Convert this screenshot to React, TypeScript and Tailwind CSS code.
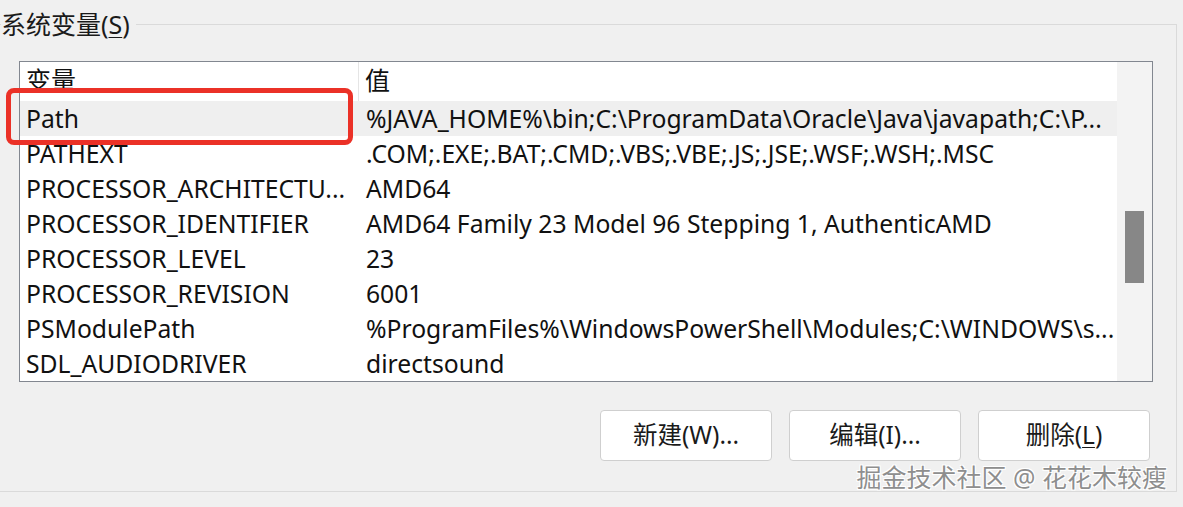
const rows = [
  { name: "Path", value: "%JAVA_HOME%\\bin;C:\\ProgramData\\Oracle\\Java\\javapath;C:\\P...", active: true },
  { name: "PATHEXT", value: ".COM;.EXE;.BAT;.CMD;.VBS;.VBE;.JS;.JSE;.WSF;.WSH;.MSC" },
  { name: "PROCESSOR_ARCHITECTU...", value: "AMD64" },
  { name: "PROCESSOR_IDENTIFIER", value: "AMD64 Family 23 Model 96 Stepping 1, AuthenticAMD" },
  { name: "PROCESSOR_LEVEL", value: "23" },
  { name: "PROCESSOR_REVISION", value: "6001" },
  { name: "PSModulePath", value: "%ProgramFiles%\\WindowsPowerShell\\Modules;C:\\WINDOWS\\s..." },
  { name: "SDL_AUDIODRIVER", value: "directsound" },
];

function Button({ children }: { children: React.ReactNode }) {
  return (
    <button className="w-[172px] h-[51px] bg-white border border-[#cfcfcf] rounded-[4px] text-[24.5px] text-[#1a1a1a] flex items-center justify-center">
      {children}
    </button>
  );
}

export default function App() {
  return (
    <div
      className="relative w-[1183px] h-[507px] bg-[#f0f0f0] overflow-hidden text-[#111]"
      style={{ fontFamily: '"Noto Sans", "Noto Sans CJK SC", sans-serif' }}
    >
      <fieldset className="-ml-[10px] mt-[8px] w-[1187px] h-[484px] border border-[#dadada] px-0">
        <legend className="ml-[10px] pr-[6px] text-[25px] leading-[32px] text-[#1a1a1a]">
          系统变量(<span className="underline underline-offset-[3px] decoration-1">S</span>)
        </legend>

        {/* list view */}
        <div className="ml-[28px] mt-[21px] w-[1134px] h-[321px] bg-white border border-[#828790] flex">
          <div className="flex-1 min-w-0 flex flex-col">
            <div className="h-[39px] flex text-[25px] leading-none">
              <div className="w-[339px] border-r border-[#e5e5e5] pl-[6px] pt-[6px]">变量</div>
              <div className="pl-[6px] pt-[6px]">值</div>
            </div>
            {rows.map((r) => (
              <div
                key={r.name}
                className={`h-[35px] flex items-center text-[24.7px] whitespace-nowrap ${r.active ? "bg-[#efefef]" : ""}`}
              >
                <div className="w-[340px] shrink-0 pl-[6px] overflow-hidden">{r.name}</div>
                <div className="pl-[6px] flex-1 min-w-0 overflow-hidden">{r.value}</div>
              </div>
            ))}
          </div>
          {/* scrollbar */}
          <div className="w-[35px] shrink-0 bg-[#f3f3f3] flex flex-col items-center pt-[149px]">
            <div className="w-[19px] h-[72px] bg-[#878787]" />
          </div>
        </div>

        <div className="mt-[28px] mr-[26px] flex justify-end gap-[17px]">
          <Button>新建(W)...</Button>
          <Button>编辑(I)...</Button>
          <Button>
            删除(<span className="underline underline-offset-[3px] decoration-1">L</span>)
          </Button>
        </div>
      </fieldset>

      {/* highlight box */}
      <div className="absolute left-[6px] top-[88px] w-[347px] h-[57px] border-[5px] border-[#eb3127] rounded-[8px]" />

      {/* watermark */}
      <div
        className="absolute right-[16px] top-[461px] text-[25px] leading-[32px] text-[#8e8e8e] whitespace-nowrap"
        style={{ textShadow: "1px 1px 0 #fff, -1px -1px 0 #fff, 1px -1px 0 #fff, -1px 1px 0 #fff" }}
      >
        掘金技术社区 @ 花花木较瘦
      </div>
    </div>
  );
}
